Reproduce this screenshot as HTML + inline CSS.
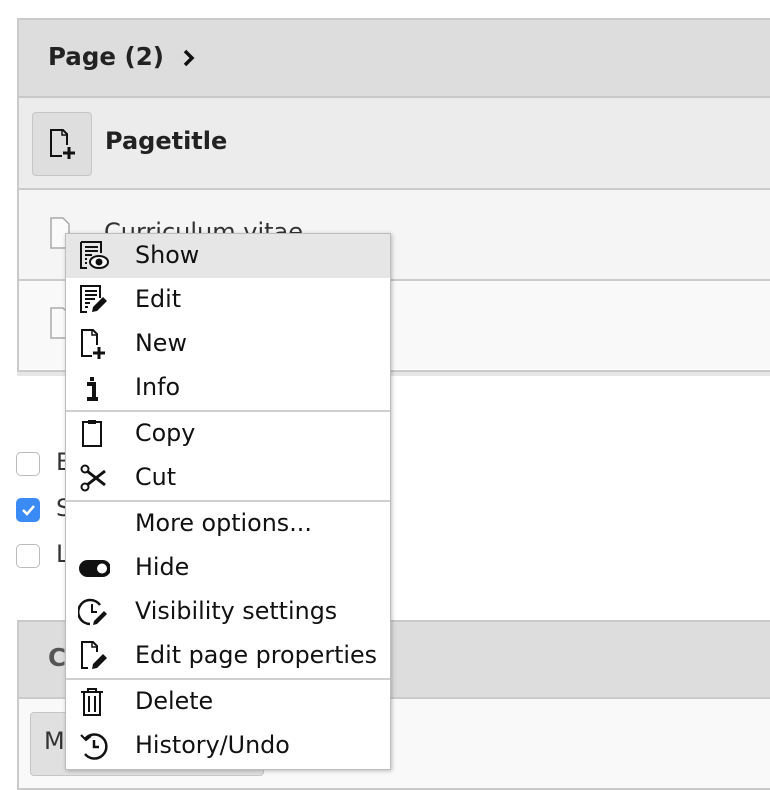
<!DOCTYPE html>
<html><head><style>
*{margin:0;padding:0;box-sizing:border-box}
body{width:770px;height:778px;overflow:hidden;background:#fff;font-family:"DejaVu Sans","Liberation Sans",sans-serif;color:#212121;position:relative}
.abs{position:absolute}
.menu{position:absolute;left:65px;top:233px;width:326px;height:537px;background:#fff;border:1px solid #bdbdbd;box-shadow:1px 1px 4px rgba(0,0,0,.25)}
.it{height:44px;position:relative;font-size:23.8px;line-height:42px;padding-left:69px;color:#111;white-space:nowrap;box-sizing:content-box}
.it svg{position:absolute;left:12px;top:6px}
.sep{border-top:2px solid #cfcfcf}
.cb{position:absolute;left:16px;width:24px;height:24px;border:1px solid #bbb;border-radius:5px;background:#fff}
</style></head><body>
<!-- panel 1 -->
<div class="abs" style="left:17px;top:18px;width:760px;height:354px;border:2px solid #cacaca;border-right:none;box-shadow:0 4px 0 #e6e6e6"></div>
<div class="abs" style="left:19px;top:20px;width:760px;height:76px;background:#ddd"></div>
<div class="abs" style="left:19px;top:96px;width:760px;height:2px;background:#c8c8c8"></div>
<div class="abs" style="left:19px;top:98px;width:760px;height:90px;background:#ececec"></div>
<div class="abs" style="left:19px;top:188px;width:760px;height:2px;background:#cacaca"></div>
<div class="abs" style="left:19px;top:190px;width:760px;height:89px;background:#f5f5f5"></div>
<div class="abs" style="left:19px;top:279px;width:760px;height:2px;background:#cacaca"></div>
<div class="abs" style="left:19px;top:281px;width:760px;height:88px;background:#f9f9f9"></div>
<div class="abs" style="left:48px;top:42px;font-size:24.5px;font-weight:bold;color:#222">Page (2)</div>
<svg class="abs" style="left:182px;top:48px" width="14" height="20"><path d="M3 3l7 7-7 7" stroke="#111" stroke-width="3.5" fill="none"/></svg>
<div class="abs" style="left:32px;top:112px;width:60px;height:64px;background:#dedede;border:1px solid #c6c6c6;border-radius:4px"></div>
<svg class="abs" style="left:48px;top:128px" width="32" height="32"><path d="M19 17V6l-4-4H3v26h11" fill="none" stroke="#111" stroke-width="2"/><path d="M14 2v5h5" fill="none" stroke="#111" stroke-width="1.5"/><path d="M21 19v12M15 25h12" stroke="#111" stroke-width="3"/></svg>
<div class="abs" style="left:105px;top:127px;font-size:24px;font-weight:bold;color:#222">Pagetitle</div>
<svg class="abs" style="left:48px;top:216px" width="26" height="36"><path d="M3 2h12l6 6v24H3z" fill="#fafafa" stroke="#aaa" stroke-width="1.5"/></svg>
<div class="abs" style="left:104px;top:218px;font-size:24px;color:#333">Curriculum vitae</div>
<svg class="abs" style="left:48px;top:306px" width="26" height="36"><path d="M3 2h12l6 6v24H3z" fill="#fafafa" stroke="#aaa" stroke-width="1.5"/></svg>
<!-- checkboxes -->
<div class="cb" style="top:452px"></div>
<div class="cb" style="top:498px;background:#3a8bf5;border-color:#3a8bf5"><svg width="22" height="22"><path d="M6 11l4 4 7-8" stroke="#fff" stroke-width="2.5" fill="none"/></svg></div>
<div class="cb" style="top:544px"></div>
<div class="abs" style="left:56px;top:448px;font-size:24px;color:#333">B</div>
<div class="abs" style="left:56px;top:494px;font-size:24px;color:#333">S</div>
<div class="abs" style="left:56px;top:540px;font-size:24px;color:#333">L</div>
<!-- panel 2 -->
<div class="abs" style="left:17px;top:620px;width:760px;height:170px;border:2px solid #cacaca;border-right:none;background:#f9f9f9"></div>
<div class="abs" style="left:19px;top:622px;width:760px;height:77px;background:#ddd;border-bottom:2px solid #cacaca"></div>
<div class="abs" style="left:48px;top:643px;font-size:24.5px;font-weight:bold;color:#555">C</div>
<div class="abs" style="left:30px;top:712px;width:234px;height:64px;background:#e0e0e0;border:1px solid #c6c6c6;border-radius:4px"></div>
<div class="abs" style="left:44px;top:727px;font-size:24px;color:#333">M</div>
<!-- menu -->
<div class="menu">
<div class="it" style="background:#e6e6e6"><svg width="32" height="32"><path d="M3 2h20v11M3 2v26h6" fill="none" stroke="#111" stroke-width="2"/><path d="M7 7h13M7 11h13M7 15h7M7 19h2M7 23h2" stroke="#111" stroke-width="2"/><ellipse cx="21" cy="22" rx="9" ry="6" fill="#fff" stroke="#111" stroke-width="2"/><circle cx="21" cy="22" r="3.5" fill="#111"/></svg>Show</div>
<div class="it"><svg width="32" height="32"><path d="M22 14V2H3v26h6" fill="none" stroke="#111" stroke-width="2"/><path d="M7 7h12M7 11h12M7 15h10M7 19h5M7 23h3" stroke="#111" stroke-width="2"/><path d="M14 28l1-5 10-10 4 4-10 10z" fill="#111"/></svg>Edit</div>
<div class="it"><svg width="32" height="32"><path d="M19 17V6l-4-4H4v26h10" fill="none" stroke="#111" stroke-width="2"/><path d="M14 2v5h5" fill="none" stroke="#111" stroke-width="1.5"/><path d="M21 19v12M15 25h12" stroke="#111" stroke-width="3"/></svg>New</div>
<div class="it"><svg width="32" height="32"><rect x="12" y="5" width="4" height="4" fill="#111"/><path d="M9 12h7v14M9 27h11" stroke="#111" stroke-width="4" fill="none"/></svg>Info</div>
<div class="it sep"><svg width="32" height="32"><rect x="5" y="4" width="18" height="24" fill="none" stroke="#111" stroke-width="2"/><rect x="10" y="2" width="8" height="4" fill="#111"/></svg>Copy</div>
<div class="it"><svg width="32" height="32"><circle cx="7" cy="7" r="3.5" fill="none" stroke="#111" stroke-width="2"/><circle cx="7" cy="25" r="3.5" fill="none" stroke="#111" stroke-width="2"/><path d="M9 9l18 14M9 23l18-14" stroke="#111" stroke-width="3"/></svg>Cut</div>
<div class="it sep">More options...</div>
<div class="it"><svg width="32" height="32"><rect x="1" y="8" width="32" height="17" rx="8.5" fill="#111"/><circle cx="24" cy="16.5" r="5" fill="#fff"/></svg>Hide</div>
<div class="it"><svg width="32" height="32"><path d="M22 9A12 12 0 1 0 12 28" fill="none" stroke="#111" stroke-width="2.5"/><path d="M14 8v8h5" stroke="#111" stroke-width="2" fill="none"/><path d="M15 29l1-4 10-10 3 3-10 10z" fill="#111"/></svg>Visibility settings</div>
<div class="it"><svg width="32" height="32"><path d="M19 12V6l-4-4H4v26h6" fill="none" stroke="#111" stroke-width="2"/><path d="M14 2v5h5" fill="none" stroke="#111" stroke-width="1.5"/><path d="M14 29l1-5 10-10 4 4-10 10z" fill="#111"/></svg>Edit page properties</div>
<div class="it sep"><svg width="32" height="32"><path d="M3 6h22M10 6V3h8v3" stroke="#111" stroke-width="2" fill="none"/><path d="M6 7v22h16V7M11 10v16M17 10v16" stroke="#111" stroke-width="2" fill="none"/></svg>Delete</div>
<div class="it"><svg width="32" height="32"><path d="M7 9A12 12 0 1 1 7 24" fill="none" stroke="#111" stroke-width="2.5"/><path d="M3 5l5 5 5-4" fill="none" stroke="#111" stroke-width="2"/><path d="M16 10v7h5" stroke="#111" stroke-width="2.5" fill="none"/></svg>History/Undo</div>
</div>
</body></html>
